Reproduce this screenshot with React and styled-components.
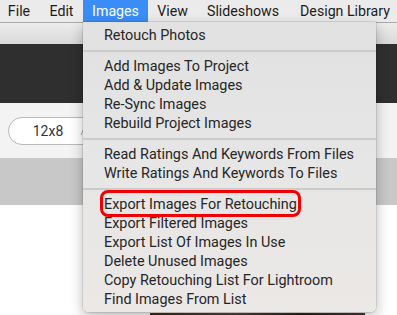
import React from "react";
import styled, { createGlobalStyle } from "styled-components";

const Global = createGlobalStyle`
  html, body { margin: 0; padding: 0; }
  body {
    width: 397px; height: 315px; overflow: hidden;
    font-family: Roboto, "Noto Sans", "Liberation Sans", sans-serif;
    background: #fff;
  }
  #root { width: 397px; height: 315px; }
`;

const Screen = styled.div`
  position: relative;
  width: 397px;
  height: 315px;
  overflow: hidden;
  display: flex;
  flex-direction: column;
`;

const MenuBar = styled.div`
  height: 22px;
  flex: none;
  display: flex;
  align-items: stretch;
  background: #ebebeb;
  border-bottom: 1px solid #a9a9a9;
  margin-left: -2px;
`;

const BarItem = styled.div`
  width: ${(p) => p.$w}px;
  flex: none;
  display: flex;
  align-items: center;
  justify-content: center;
  font-size: 14.2px;
  color: ${(p) => (p.$active ? "#fff" : "#1c1c1c")};
  background: ${(p) => (p.$active ? "#3a8df6" : "transparent")};
  white-space: nowrap;
`;

const Toolbar = styled.div`
  height: 21px;
  flex: none;
  background: linear-gradient(#ececec, #d9d9d9);
`;

const DarkBand = styled.div`
  height: 59px;
  flex: none;
  background: #2f2f2f;
`;

const LightBand = styled.div`
  height: 55px;
  flex: none;
  background: #f3f3f3;
  display: flex;
  align-items: center;
  padding-left: 8px;
`;

const Pill = styled.div`
  height: 26px;
  width: 110px;
  border: 1px solid #b9b9b9;
  border-radius: 14px;
  background: #fff;
  display: flex;
  align-items: center;
  padding-left: 10px;
  gap: 3px;
  box-sizing: content-box;
`;

const PillLabel = styled.span`
  width: 58px;
  text-align: center;
  font-size: 14px;
  color: #333;
`;

const GrayBand = styled.div`
  height: 47px;
  flex: none;
  background: #c8c8c8;
`;

const WhiteArea = styled.div`
  flex: 1;
  background: #fff;
  display: flex;
  padding-top: 108px;
`;

const Photo = styled.div`
  margin-left: 150px;
  width: 215px;
  height: 10px;
  background: linear-gradient(90deg, #3a2a22, #5a4336 40%, #2c2420 70%, #4a3a30);
`;

const Dropdown = styled.div`
  position: absolute;
  left: 83px;
  top: 22px;
  width: 293px;
  height: 290px;
  box-sizing: border-box;
  padding-top: 3.5px;
  background: linear-gradient(#e1e1e1, #e6e6e6 50%, #ebe8e5);
  border-radius: 0 0 5px 5px;
  box-shadow: 0 5px 14px rgba(0, 0, 0, 0.28), 0 0 0 0.5px rgba(0, 0, 0, 0.18);
  display: flex;
  flex-direction: column;
`;

const Item = styled.div`
  height: 19px;
  display: flex;
  align-items: center;
  padding-left: 21px;
  font-size: 14.4px;
  color: #262626;
  white-space: nowrap;
`;

const ItemText = styled.span`
  position: relative;
  ${(p) =>
    p.$marked &&
    `
    &::after {
      content: "";
      position: absolute;
      left: -4px; right: -4px; top: -6px; bottom: -4px;
      border: 3px solid #f00000;
      border-radius: 8px;
    }
  `}
`;

const Separator = styled.div`
  height: 2px;
  margin: 5px 0;
  background: #cbcbcb;
`;

const bar = [
  ["File", 42],
  ["Edit", 43],
  ["Images", 65, true],
  ["View", 49],
  ["Slideshows", 92],
  ["Design Library", 112],
];

const groups = [
  ["Retouch Photos"],
  ["Add Images To Project", "Add & Update Images", "Re-Sync Images", "Rebuild Project Images"],
  ["Read Ratings And Keywords From Files", "Write Ratings And Keywords To Files"],
  [
    "Export Images For Retouching",
    "Export Filtered Images",
    "Export List Of Images In Use",
    "Delete Unused Images",
    "Copy Retouching List For Lightroom",
    "Find Images From List",
  ],
];

export default function App() {
  return (
    <Screen>
      <Global />
      <MenuBar>
        {bar.map(([t, w, a]) => (
          <BarItem key={t} $w={w} $active={a}>
            {t}
          </BarItem>
        ))}
      </MenuBar>
      <Toolbar />
      <DarkBand />
      <LightBand>
        <Pill>
          <PillLabel>12x8</PillLabel>
          <svg width="10" height="10" viewBox="0 0 10 10">
            <path d="M1 9 L4 2 L7 9" fill="none" stroke="#aaa" strokeWidth="1" />
          </svg>
        </Pill>
      </LightBand>
      <GrayBand />
      <WhiteArea>
        <Photo />
      </WhiteArea>
      <Dropdown>
        {groups.map((g, gi) => (
          <React.Fragment key={gi}>
            {gi > 0 && <Separator />}
            {g.map((t) => (
              <Item key={t}>
                <ItemText $marked={t === "Export Images For Retouching"}>{t}</ItemText>
              </Item>
            ))}
          </React.Fragment>
        ))}
      </Dropdown>
    </Screen>
  );
}
